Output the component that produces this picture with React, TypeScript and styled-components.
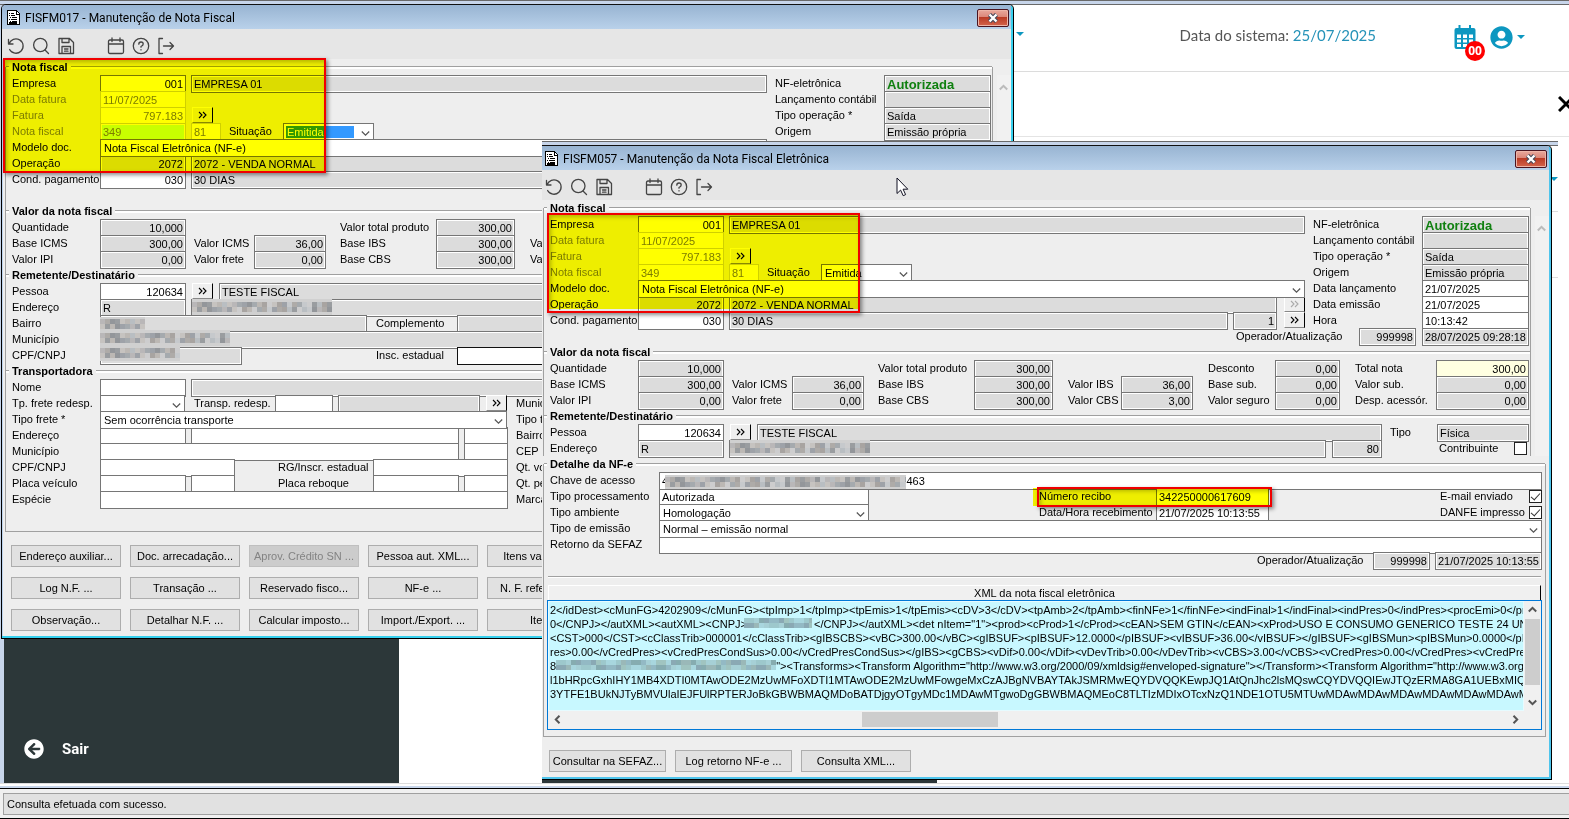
import React, { useId } from 'react';
import styled, { createGlobalStyle, css } from 'styled-components';
import { FaArrowCircleLeft, FaUserCircle } from 'react-icons/fa';

const Global = createGlobalStyle`
  * { box-sizing: border-box; }
  body {
    margin: 0;
    overflow: hidden;
    background: #fff;
    color: #000;
    font: 11px/16px "Liberation Sans", Arial, sans-serif;
  }
  button, input, select, textarea { font: inherit; color: inherit; margin: 0; border-radius: 0; }
  h1, h2 { margin: 0; font-size: inherit; }
`;

/* ---------- application shell ---------- */

const Desktop = styled.div`
  position: relative;
  display: flex;
  flex-direction: column;
  min-height: 100vh;
  overflow: hidden;
`;

const FrameEdge = styled.div`
  flex: none;
  height: 5px;
  border-top: 1px solid #696969;
  border-bottom: 1px solid #696969;
  background: #c7d5ea;
`;

const PageArea = styled.div`
  flex: 1;
  display: flex;
  flex-direction: column;
  border-left: 4px solid #c7d5ea;
`;

const AppHeader = styled.header`
  display: flex;
  align-items: center;
  justify-content: flex-end;
  height: 67px;
  padding: 0 44px 2px 0;
  border-bottom: 1px solid #dcdcdc;
  color: #0d97c0;
`;

const SystemDate = styled.p`
  margin: 0 64px 4px 0;
  font: 400 15px/24px Lato, "Open Sans", sans-serif;
  color: #555;
  span { color: #2592b8; }
`;

const IconButton = styled.button`
  position: relative;
  display: flex;
  align-items: center;
  gap: 4px;
  padding: 0;
  border: 0;
  background: none;
  color: #0d97c0;
  margin-left: 14px;
`;

const Badge = styled.span`
  position: absolute;
  left: 11px;
  top: 16px;
  width: 20px;
  height: 20px;
  border-radius: 50%;
  background: #f00;
  color: #fff;
  font: 700 12px/19px "Open Sans", sans-serif;
  text-align: center;
`;

const Caret = styled.span`
  width: 0;
  border: 4px solid transparent;
  border-top-color: #0d97c0;
  border-bottom: 0;
`;

const SubHeader = styled.div`
  display: flex;
  justify-content: flex-end;
  align-items: center;
  height: 65px;
  border-bottom: 1px solid #e4e4e4;
  overflow: hidden;
`;

const DismissButton = styled.button`
  flex: none;
  width: 16px;
  height: 16px;
  padding: 0;
  margin-right: -5px;
  border: 0;
  background: none;
`;

const MenuCaret = styled(Caret)`
  position: absolute;
  left: 1016px;
  top: 32px;
`;

const PageBody = styled.div`
  flex: 1;
  display: flex;
`;

const Sidebar = styled.nav`
  display: flex;
  align-items: flex-end;
  width: 395px;
  padding: 0 0 22px 20px;
  background: #2c3739;
`;

const ExitLink = styled.a`
  display: flex;
  align-items: center;
  gap: 18px;
  color: #fff;
  text-decoration: none;
  font: 700 15px/24px Roboto, sans-serif;
`;

const BottomEdge = styled.div`
  flex: none;
  height: 6px;
  border-top: 1px solid #ddd;
  border-bottom: 1px solid #000;
  background: linear-gradient(#fff 2px, #c7d5ea 2px);
`;

const StatusBar = styled.footer`
  flex: none;
  padding: 4px 0 3px 3px;
  background: #f0f0f0;
  border-bottom: 1px solid #000;
`;

const StatusText = styled.div`
  border: 1px solid #a0a0a0;
  border-right: 0;
  background: #e1e1e1;
  padding: 0 3px;
  height: 22px;
  line-height: 20px;
`;

const BackPage = styled.div`
  position: absolute;
  left: 542px;
  right: 11px;
  top: 141px;
  bottom: 36px;
  display: flex;
  flex-direction: column;
  background: #fff;
`;

const BackBar = styled.div`
  display: flex;
  align-items: center;
  justify-content: flex-end;
  height: 66px;
  border-bottom: 1px solid #ddd;
`;

const BackSidebar = styled.div`
  margin-top: auto;
  width: 395px;
  height: 8px;
  background: #2c3739;
`;

/* ---------- windows ---------- */

const WindowBox = styled.section<{ $second?: boolean }>`
  position: absolute;
  background: #eee;
  border-top: 1px solid #111;
  border-bottom: 1px solid #000;
  border-right: 1px solid #000;
  border-top-right-radius: 5px;
  overflow: hidden;
  ${(p) =>
    p.$second
      ? css`
          left: 542px;
          right: 17px;
          top: 145px;
          box-shadow: inset -2px -2px 0 #4fc5ec;
          --pad: 1px;
        `
      : css`
          left: 1px;
          width: calc(100% - 556px);
          top: 4px;
          border-left: 1px solid #000;
          border-top-left-radius: 5px;
          box-shadow: inset -2px -2px 0 #37d0ee, inset 1px 0 0 #bcd3ee;
          --pad: 3px;
        `}
  padding-bottom: 7px;
`;

const TitleBar = styled.header`
  display: flex;
  align-items: center;
  height: 24px;
  margin-right: 2px;
  padding: 1px 2px 0 calc(var(--pad) + 2px);
  background: linear-gradient(#98b4d2, #b9d1ea);
  h1 {
    flex: 1;
    padding-left: 5px;
    font: 400 12px/22px Roboto, "Open Sans", sans-serif;
  }
`;

const CloseButton = styled.button`
  display: grid;
  place-items: center;
  width: 32px;
  height: 18px;
  padding: 0;
  border: 1px solid #4a1420;
  border-radius: 2px;
  background: linear-gradient(#e9a99d 0, #dc8678 44%, #b93a24 45%, #d4644c);
  box-shadow: inset 0 0 0 1px #eeb5a8;
`;

const Toolbar = styled.div`
  display: flex;
  align-items: center;
  height: 30px;
  margin-right: 2px;
  padding-top: 3px;
  padding-left: calc(var(--pad) - 1px);
  background: #e6e6e6;
`;

const ToolButton = styled.button<{ $apart?: boolean }>`
  display: grid;
  align-items: center;
  justify-items: start;
  width: 25px;
  height: 25px;
  padding: 0 0 0 3px;
  border: 0;
  background: none;
  margin-left: ${(p) => (p.$apart ? 25 : 0)}px;
`;

const Scroller = styled.div`
  display: flex;
  margin-right: 2px;
  padding-left: var(--pad);
`;

const DetailScroller = styled(Scroller)`
  padding-right: 3px;
`;

const Frame = styled.div<{ $open?: boolean }>`
  flex: 1;
  min-width: 0;
  margin-top: 8px;
  border: 1px solid #a0a0a0;
  border-top: 0;
  ${(p) => p.$open && 'border-bottom: 0;'}
  & > section:first-child > h2:first-child { margin-top: -8px; }
`;

const Rail = styled.div`
  width: 18px;
  margin-top: 16px;
  padding: 5px 0 0 2px;
  border-left: 4px solid #eee;
  background: #f1f1f1;
`;

const Group = styled.section<{ $tail?: boolean }>`
  padding: 0 1px ${(p) => (p.$tail ? 24 : 0)}px 6px;
`;

const Legend = styled.h2`
  display: flex;
  align-items: center;
  height: 16px;
  margin: 0 -1px 0 -6px;
  gap: 3px;
  font-weight: 700;
  white-space: nowrap;
  &::before, &::after {
    content: "";
    height: 2px;
    border-top: 1px solid #a0a0a0;
    background: #fff;
  }
  &::before { width: 3px; }
  &::after { flex: 1; }
`;

const Row = styled.div<{ $end?: boolean }>`
  display: flex;
  align-items: flex-start;
  justify-content: ${(p) => (p.$end ? 'flex-end' : 'flex-start')};
  height: 16px;
`;

const Columns = styled.div`
  display: flex;
  gap: 8px;
`;

const MainColumn = styled.div`
  flex: 1;
  min-width: 0;
`;

const SideColumn = styled.div`
  flex: none;
  width: 216px;
`;

const Caption = styled.label<{ $w?: number; $pad?: number; $muted?: boolean }>`
  flex: none;
  width: ${(p) => (p.$w ? `${p.$w}px` : 'auto')};
  padding-left: ${(p) => p.$pad ?? 0}px;
  color: ${(p) => (p.$muted ? '#7c7c7c' : '#000')};
  white-space: nowrap;
`;

type Tone = 'plain' | 'gray' | 'off' | 'cream' | 'focus' | 'strong' | 'dark';

const tones: Record<Tone, ReturnType<typeof css>> = {
  plain: css`background: #fff;`,
  gray: css`background: #dcdcdc; box-shadow: inset 0 0 0 1px #fff;`,
  off: css`background: #fff; border-color: #d0d0d0; color: #7c7c7c;`,
  cream: css`background: #ffffe1;`,
  focus: css`background: #c8ffff; border-color: #d0d0d0; color: #7c7c7c; box-shadow: inset 0 0 0 1px #fff;`,
  strong: css`
    background: #dcdcdc;
    box-shadow: inset 0 0 0 1px #fff;
    color: #108010;
    font-size: 13px;
    font-weight: 700;
  `,
  dark: css`background: #fff; border-color: #111;`,
};

const Field = styled.input<{ $w?: number; $gap?: number; $tone?: Tone; $right?: boolean }>`
  ${(p) => (p.$w ? `flex: none; width: ${p.$w}px;` : 'flex: 1; min-width: 0; width: 0;')}
  height: 18px;
  margin-left: ${(p) => p.$gap ?? 0}px;
  padding: 0 2px;
  border: 1px solid #767676;
  outline: 0;
  line-height: 16px;
  text-align: ${(p) => (p.$right ? 'right' : 'left')};
  ${(p) => tones[p.$tone ?? 'plain']}
`;

const Picker = styled.span<{ $w?: number; $gap?: number }>`
  position: relative;
  display: block;
  ${(p) => (p.$w ? `flex: none; width: ${p.$w}px;` : 'flex: 1;')}
  margin-left: ${(p) => p.$gap ?? 0}px;
  svg { position: absolute; right: 4px; top: 6px; }
`;

const PickerInput = styled.select<{ $selected?: boolean }>`
  display: block;
  appearance: none;
  width: 100%;
  height: 18px;
  padding: 0 3px 2px;
  border: 1px solid #767676;
  outline: 0;
  background: #fff;
  ${(p) =>
    p.$selected &&
    css`
      color: #fff;
      background: linear-gradient(to right, #3399ff 70px, #fff 70px);
      box-shadow: inset 0 0 0 2px #fff;
    `}
`;

const LookupButton = styled.button<{ $gap: number }>`
  flex: none;
  display: grid;
  place-items: center;
  width: 21px;
  height: 16px;
  margin-left: ${(p) => p.$gap}px;
  padding: 0;
  border: 1px solid #fff;
  border-right-color: #000;
  border-bottom-color: #888;
  background: #eee;
  color: #000;
  &:disabled { color: #aaa; }
`;

const Tick = styled.input`
  appearance: none;
  flex: none;
  width: 13px;
  height: 13px;
  margin: 2px 1px 0 auto;
  border: 1px solid #222;
  background: #fff;
  display: grid;
  place-items: center;
  &:checked::after {
    content: "";
    width: 4px;
    height: 8px;
    margin-top: -2px;
    border: solid #333;
    border-width: 0 1px 1px 0;
    rotate: 42deg;
  }
`;

const ValueGrid = styled.div`
  display: grid;
  grid-template-columns: 88px 86px 68px 72px 110px 79px 68px 72px 82px 65px 96px 93px;
  grid-auto-rows: 16px;
  ${Field} { width: 100%; }
`;

const Masked = styled.span<{ $x: number; $y?: number }>`
  position: absolute;
  left: ${(p) => p.$x}px;
  top: ${(p) => p.$y ?? 2}px;
  line-height: 0;
`;

const Holder = styled.div`
  position: relative;
`;

const ButtonGrid = styled.div`
  display: grid;
  grid-template-columns: repeat(5, 110px);
  gap: 10px 9px;
  padding: 13px 0 0 9px;
`;

const ButtonBar = styled.div`
  display: flex;
  gap: 9px;
  padding: 13px 0 0 7px;
`;

const PushButton = styled.button<{ $w?: number }>`
  width: ${(p) => (p.$w ? `${p.$w}px` : 'auto')};
  height: 22px;
  padding: 0;
  border: 1px solid #adadad;
  background: #e1e1e1;
  white-space: nowrap;
  &:disabled { background: #ccc; border-color: #bfbfbf; color: #838383; }
`;

const Wash = styled.div<{ $box: string; $w?: number; $h?: number }>`
  position: absolute;
  inset: ${(p) => p.$box};
  ${(p) => p.$w && `width: ${p.$w}px; height: ${p.$h}px;`}
  background: #ff0;
  mix-blend-mode: multiply;
  pointer-events: none;
`;

const Outline = styled.div<{ $box: string; $w?: number; $h?: number }>`
  position: absolute;
  inset: ${(p) => p.$box};
  ${(p) => p.$w && `width: ${p.$w}px; height: ${p.$h}px;`}
  border: 2px solid #f00000;
  box-shadow: 2px 2px 4px rgba(0, 0, 0, 0.45), inset 2px 2px 4px rgba(0, 0, 0, 0.25);
  pointer-events: none;
`;

const Marked = styled.div`
  position: relative;
`;

const TickSlot = styled.div`
  display: flex;
  width: 104px;
  margin-left: auto;
  padding-right: 1px;
`;

const Divider = styled.hr`
  height: 2px;
  margin: 8px 3px 7px -2px;
  border: 0;
  border-top: 1px solid #a0a0a0;
  background: #fff;
`;

const XmlHeading = styled.h2`
  margin: 0 3px 0 -2px;
  height: 15px;
  border: 1px solid #fff;
  border-right-color: #000;
  border-bottom: 0;
  background: #f0f0f0;
  font-weight: 400;
  line-height: 15px;
  text-align: center;
`;

const XmlBox = styled.div`
  position: relative;
  display: grid;
  grid-template-columns: 1fr 17px;
  grid-template-rows: 110px 18px;
  margin: 0 2px 6px -3px;
  border: 1px solid #0078d7;
  background: #f0f0f0;
`;

const XmlText = styled.textarea`
  display: block;
  resize: none;
  overflow: hidden;
  width: 100%;
  padding: 1px 0 0 1px;
  border: 1px solid #e6fbff;
  outline: 0;
  background: #c8f8ff;
  line-height: 14px;
  white-space: pre;
`;

const VBar = styled.div`
  display: flex;
  flex-direction: column;
  align-items: center;
  justify-content: space-between;
  padding: 4px 1px;
  &::before {
    content: "";
    order: 1;
    width: 15px;
    height: 66px;
    margin-bottom: 9px;
    background: #cdcdcd;
  }
  svg:last-child { order: 2; }
`;

const HBar = styled.div`
  display: flex;
  align-items: center;
  padding: 0 4px 2px 5px;
`;

const HThumb = styled.span`
  width: 136px;
  height: 15px;
  margin-left: 31%;
  margin-right: auto;
  background: #cdcdcd;
`;

const Pointer = styled.svg`
  position: absolute;
  left: 896px;
  top: 177px;
`;

/* ---------- drawings ---------- */

const stroke = { fill: 'none', stroke: '#444', strokeWidth: 1.3, strokeLinecap: 'round' as const, strokeLinejoin: 'round' as const };

const Icon = ({ children }: { children: React.ReactNode }) => (
  <svg width="18" height="18" viewBox="0 0 18 18" {...stroke}>{children}</svg>
);

const AgendaIcon = () => (
  <svg width="22" height="24" viewBox="0 0 22 24">
    <path d="M4.500 0h2v3h8.500V0h2v3h2.500Q21.500 3 21.500 5v17q0 2-2 2h-17q-2 0-2-2V5q0-2 2-2h2z" fill="currentColor" />
    <path d="M3 9.500h4v3.500H3zM9 9.500h4v3.500H9zM15 9.500h4v3.500h-4zM3 14.500h4v3H3zM9 14.500h4v3H9zM15 14.500h4v3h-4zM3 19h4v3H3zM9 19h4v3H9zM15 19h4v3h-4z" fill="#fff" />
  </svg>
);

const PageIcon = () => (
  <svg width="13" height="15" viewBox="0 0 13 15" shapeRendering="crispEdges">
    <path d="M.5.5h9l3 3v11H.5z" fill="#fff" stroke="#000" />
    <path d="M9.500 1v3H12M12.500 3v11.500H1" fill="none" stroke="#000" />
    <path d="M2 3.500h1M4 3.500h3M2 5.500h1M4 5.500h4M3 7.500h1M5 7.500h5M2 9.500h1M4 9.500h6M3 11.500h1M5 11.500h5M2 13h8" stroke="#000" strokeWidth="1.300" />
  </svg>
);

const Chevron = ({ color = '#555', turn = 0, heavy = false, size = 9 }) => (
  <svg width={size} height={size} viewBox="0 0 9 9" fill="none" stroke={color} strokeWidth={heavy ? 2 : 1.2}>
    <path d="M.8 2.500 4.500 6.200 8.200 2.500" transform={`rotate(${turn} 4.500 4.500)`} />
  </svg>
);

const DoubleArrow = () => (
  <svg width="9" height="8" viewBox="0 0 9 8" fill="none" stroke="currentColor" strokeWidth="1.100">
    <path d="M1 1l3 3-3 3M5 1l3 3-3 3" />
  </svg>
);

const shades = ['#b9b7b8', '#9a9da0', '#c6c9cc', '#a8a4a1', '#a5aaae', '#c6c3c0', '#93969a', '#b9bec2', '#aeaba8', '#cdcdce', '#9ea2a8', '#bcb8b4'];
const aquaShades = ['#9dc8cc', '#86acb0', '#a6d0d6', '#93b9c4', '#a0c4c0', '#8aa9b4', '#a8d6de', '#9ab8b8'];

const Mosaic = ({ w, h = 10, cover = 0, aqua = false }: { w: number; h?: number; cover?: number; aqua?: boolean }) => {
  const set = aqua ? aquaShades : shades;
  const cells = [];
  for (let y = 0; y * 5 < h; y++)
    for (let x = 0; x * 5 < w; x++)
      cells.push(<rect key={`${x}-${y}`} x={x * 5} y={y * 5 + cover} width="5" height="5" fill={set[(x * 7 + y * 5 + ((x * x) % 5)) % set.length]} />);
  return (
    <svg width={w} height={h + cover * 2} shapeRendering="crispEdges" aria-hidden="true">
      <rect width={w} height={h + cover * 2} fill={aqua ? '#b4e4ea' : '#d0d0d0'} />
      {cells}
    </svg>
  );
};

/* ---------- shared pieces ---------- */

type BoxProps = { value?: string; w?: number; gap?: number; tone?: Tone; right?: boolean; id?: string; name?: string };

const Box = ({ value = '', w, gap, tone, right, id, name }: BoxProps) => (
  <Field id={id} aria-label={id ? undefined : name} readOnly defaultValue={value} $w={w} $gap={gap} $tone={tone} $right={right} />
);

const Select = ({ value = '', w, gap, id, selected }: { value?: string; w?: number; gap?: number; id: string; selected?: boolean }) => (
  <Picker $w={w} $gap={gap}>
    <PickerInput id={id} defaultValue={value} $selected={selected}>
      <option value={value}>{value}</option>
    </PickerInput>
    <Chevron />
  </Picker>
);

const Lookup = ({ gap, disabled }: { gap: number; disabled?: boolean }) => (
  <LookupButton type="button" aria-label="Pesquisar" $gap={gap} disabled={disabled}><DoubleArrow /></LookupButton>
);

type LabelledProps = BoxProps & { label: string; lw?: number; pad?: number; muted?: boolean };

const Labelled = ({ label, lw, pad, muted, ...box }: LabelledProps) => {
  const id = useId();
  return (
    <>
      <Caption htmlFor={id} $w={lw} $pad={pad} $muted={muted}>{label}</Caption>
      <Box id={id} {...box} />
    </>
  );
};

const LabelledSelect = ({ label, lw, pad, ...rest }: { label: string; lw: number; pad?: number; value?: string; w?: number; gap?: number; selected?: boolean }) => {
  const id = useId();
  return (
    <>
      <Caption htmlFor={id} $w={lw} $pad={pad}>{label}</Caption>
      <Select id={id} {...rest} />
    </>
  );
};

const LabelledTick = ({ label, checked, lw }: { label: string; checked?: boolean; lw: number }) => {
  const id = useId();
  return (
    <>
      <Caption htmlFor={id} $w={lw}>{label}</Caption>
      <Tick id={id} type="checkbox" defaultChecked={checked} />
    </>
  );
};

const WindowChrome = ({ title }: { title: string }) => (
  <>
    <TitleBar>
      <PageIcon />
      <h1>{title}</h1>
      <CloseButton type="button" aria-label="Fechar">
        <svg width="12" height="10" viewBox="0 0 12 10">
          <path d="M2.500 1.500 9.500 8.500M9.500 1.500 2.500 8.500" stroke="#454a5c" strokeWidth="4.400" />
          <path d="M2.500 1.500 9.500 8.500M9.500 1.500 2.500 8.500" stroke="#fff" strokeWidth="2.400" />
        </svg>
      </CloseButton>
    </TitleBar>
    <Toolbar>
      <ToolButton type="button" aria-label="Desfazer">
        <Icon><path d="M1.500 2.500v4.500h4.500M2 7a7.200 7.200 0 1 1 .6 5.500" /></Icon>
      </ToolButton>
      <ToolButton type="button" aria-label="Consultar">
        <Icon><circle cx="8.300" cy="8" r="6.700" /><path d="m13 13 3.500 3.500" /></Icon>
      </ToolButton>
      <ToolButton type="button" aria-label="Salvar">
        <Icon><path d="M2 1.500h10.500l4 4v11H2zM5 1.500v4h7v-4M5 16.500V9.500h8.500v7M7.500 12h3.500M7.500 14.200h3.500" /></Icon>
      </ToolButton>
      <ToolButton type="button" aria-label="Calendário" $apart>
        <Icon><path d="M3 3h12q1.500 0 1.500 1.500v10.500q0 1.500-1.500 1.500H3q-1.500 0-1.500-1.500V4.500Q1.500 3 3 3zM1.500 7h15M5 1v3.500M13 1v3.500" /></Icon>
      </ToolButton>
      <ToolButton type="button" aria-label="Ajuda">
        <Icon><circle cx="9" cy="9" r="7.700" /><path d="M6.800 7.200q0-2.200 2.200-2.200t2.200 1.900q0 1.300-2.200 2.600v.7M9 12.700v.2" /></Icon>
      </ToolButton>
      <ToolButton type="button" aria-label="Sair">
        <Icon><path d="M5.500 1.500H2v15h3.500M6.500 9h10M13 5.500 16.500 9 13 12.500" /></Icon>
      </ToolButton>
    </Toolbar>
  </>
);

const InvoiceGroup = ({ selected }: { selected?: boolean }) => (
  <Group>
    <Legend>Nota fiscal</Legend>
    <Columns>
      <MainColumn>
        <Row>
          <Labelled label="Empresa" lw={88} value="001" w={86} right />
          <Box name="Nome da empresa" value="EMPRESA 01" gap={5} tone="gray" />
        </Row>
        <Row><Labelled label="Data fatura" muted lw={88} value="11/07/2025" w={86} tone="off" /></Row>
        <Row>
          <Labelled label="Fatura" muted lw={88} value="797.183" w={86} tone="off" right />
          <Lookup gap={6} />
        </Row>
        <Row>
          <Labelled label="Nota fiscal" muted lw={88} value="349" w={86} tone={selected ? 'focus' : 'off'} />
          <Box name="Série" value="81" w={30} gap={5} tone="off" />
          <LabelledSelect label="Situação" lw={62} pad={8} value="Emitida" w={91} selected={selected} />
        </Row>
        <Row><LabelledSelect label="Modelo doc." lw={88} value="Nota Fiscal Eletrônica (NF-e)" /></Row>
        <Row>
          <Labelled label="Operação" lw={88} value="2072" w={86} tone="gray" right />
          <Box name="Descrição da operação" value="2072 - VENDA NORMAL" gap={5} tone="gray" />
          <Lookup gap={7} disabled />
        </Row>
        <Row>
          <Labelled label="Cond. pagamento" lw={88} value="030" w={86} right />
          <Box name="Descrição da condição" value="30 DIAS" gap={5} tone="gray" />
          <Box name="Parcelas" value="1" w={44} gap={5} tone="gray" right />
          <Lookup gap={7} />
        </Row>
      </MainColumn>
      <SideColumn>
        <Row><Labelled label="NF-eletrônica" lw={109} value="Autorizada" tone="strong" /></Row>
        <Row><Labelled label="Lançamento contábil" lw={109} tone="gray" /></Row>
        <Row><Labelled label="Tipo operação *" lw={109} value="Saída" tone="gray" /></Row>
        <Row><Labelled label="Origem" lw={109} value="Emissão própria" tone="gray" /></Row>
        {!selected && (
          <>
            <Row><Labelled label="Data lançamento" lw={109} value="21/07/2025" /></Row>
            <Row><Labelled label="Data emissão" lw={109} value="21/07/2025" /></Row>
            <Row><Labelled label="Hora" lw={109} value="10:13:42" /></Row>
          </>
        )}
      </SideColumn>
    </Columns>
    <Row $end>
      {!selected && (
        <>
          <Labelled label="Operador/Atualização" lw={123} value="999998" w={57} tone="gray" right />
          <Box name="Data da atualização" value="28/07/2025 09:28:18" w={107} gap={6} tone="gray" />
        </>
      )}
    </Row>
  </Group>
);

const amounts: (null | [string, string, Tone?])[] = [
  ['Quantidade', '10,000'], null, ['Valor total produto', '300,00'], null, ['Desconto', '0,00'], ['Total nota', '300,00', 'cream'],
  ['Base ICMS', '300,00'], ['Valor ICMS', '36,00'], ['Base IBS', '300,00'], ['Valor IBS', '36,00'], ['Base sub.', '0,00'], ['Valor sub.', '0,00'],
  ['Valor IPI', '0,00'], ['Valor frete', '0,00'], ['Base CBS', '300,00'], ['Valor CBS', '3,00'], ['Valor seguro', '0,00'], ['Desp. acessór.', '0,00'],
];
const amountPads = [0, 8, 14, 15, 15, 15];

const AmountGroup = () => (
  <Group>
    <Legend>Valor da nota fiscal</Legend>
    <ValueGrid>
      {amounts.map((a, i) =>
        a ? (
          <Labelled key={i} label={a[0]} pad={amountPads[i % 6]} value={a[1]} tone={a[2] ?? 'gray'} right />
        ) : (
          <React.Fragment key={i}><span /><span /></React.Fragment>
        ),
      )}
    </ValueGrid>
  </Group>
);

const PersonRows = () => (
  <>
    <Row>
      <Labelled label="Pessoa" lw={88} value="120634" w={86} right />
      <Lookup gap={6} />
      <Box name="Nome da pessoa" value="TESTE FISCAL" gap={6} tone="gray" />
      <Labelled label="Tipo" lw={55} pad={8} value="Física" w={92} tone="gray" />
    </Row>
    <Holder>
      <Row>
        <Labelled label="Endereço" lw={88} value="R" w={86} tone="gray" />
        <Box name="Logradouro" gap={5} tone="gray" />
        <Box name="Número" value="80" w={50} gap={6} tone="gray" right />
        <Caption as="span" $w={57} />
        <LabelledTick label="Contribuinte" lw={75} />
        <Caption as="span" $w={1} />
      </Row>
      <Masked $x={180} $y={0}><Mosaic w={140} cover={3} /></Masked>
    </Holder>
  </>
);

const gap = '\u00a0';
const xml = [
  '2</idDest><cMunFG>4202909</cMunFG><tpImp>1</tpImp><tpEmis>1</tpEmis><cDV>3</cDV><tpAmb>2</tpAmb><finNFe>1</finNFe><indFinal>1</indFinal><indPres>0</indPres><procEmi>0</procEmi><verProc>',
  `0</CNPJ></autXML><autXML><CNPJ>${gap.repeat(22)}</CNPJ></autXML><det nItem="1"><prod><cProd>1</cProd><cEAN>SEM GTIN</cEAN><xProd>USO E CONSUMO GENERICO TESTE 24 UNICA</xProd>`,
  '<CST>000</CST><cClassTrib>000001</cClassTrib><gIBSCBS><vBC>300.00</vBC><gIBSUF><pIBSUF>12.0000</pIBSUF><vIBSUF>36.00</vIBSUF></gIBSUF><gIBSMun><pIBSMun>0.0000</pIBSMun><vIBSMun>',
  'res>0.00</vCredPres><vCredPresCondSus>0.00</vCredPresCondSus></gIBS><gCBS><vDif>0.00</vDif><vDevTrib>0.00</vDevTrib><vCBS>3.00</vCBS><vCredPres>0.00</vCredPres><vCredPresCondSus>',
  `8${gap.repeat(72)}"><Transforms><Transform Algorithm="http://www.w3.org/2000/09/xmldsig#enveloped-signature"></Transform><Transform Algorithm="http://www.w3.org/`,
  'l1bHRpcGxhIHY1MB4XDTI0MTAwODE2MzUwMFoXDTI1MTAwODE2MzUwMFowgeMxCzAJBgNVBAYTAkJSMRMwEQYDVQQKEwpJQ1AtQnJhc2lsMQswCQYDVQQIEwJTQzERMA8GA1UEBxMIQmx1bWVu',
  '3YTFE1BUkNJTyBMVUlaIEJFUlRPTERJoBkGBWBMAQMDoBATDjgyOTgyMDc1MDAwMTgwoDgGBWBMAQMEoC8TLTIzMDIxOTcxNzQ1NDE1OTU5MTUwMDAwMDAwMDAwMDAwMDAwMDAwMDAwMDAwMDAw',
].join('\n');

const actions = [
  'Endereço auxiliar...', 'Doc. arrecadação...', 'Aprov. Crédito SN ...', 'Pessoa aut. XML...', 'Itens variados...',
  'Log N.F. ...', 'Transação ...', 'Reservado fisco...', 'NF-e ...', 'N. F. referência...',
  'Observação...', 'Detalhar N.F. ...', 'Calcular imposto...', 'Import./Export. ...', 'Itens',
];

const InvoiceWindow = () => (
  <WindowBox>
    <WindowChrome title="FISFM017 - Manutenção de Nota Fiscal" />
    <Scroller>
      <Frame>
        <InvoiceGroup selected />
        <AmountGroup />
        <Group>
          <Legend>Remetente/Destinatário</Legend>
          <PersonRows />
          <Holder>
            <Row>
              <Labelled label="Bairro" lw={88} w={267} tone="gray" />
              <Labelled label="Complemento" lw={90} pad={9} tone="gray" />
            </Row>
            <Row><Labelled label="Município" lw={88} tone="gray" /></Row>
            <Row>
              <Labelled label="CPF/CNPJ" lw={88} w={142} tone="gray" />
              <Labelled label="Insc. estadual" lw={215} pad={134} w={260} tone="dark" />
            </Row>
            <Masked $x={88}><Mosaic w={45} cover={2} /></Masked>
            <Masked $x={88} $y={15}><Mosaic w={130} cover={3} /></Masked>
            <Masked $x={88} $y={30}><Mosaic w={80} cover={3} /></Masked>
          </Holder>
        </Group>
        <Group $tail>
          <Legend>Transportadora</Legend>
          <Row>
            <Labelled label="Nome" lw={88} w={86} />
            <Box name="Nome da transportadora" gap={5} tone="gray" />
          </Row>
          <Row>
            <LabelledSelect label="Tp. frete redesp." lw={88} w={85} />
            <Labelled label="Transp. redesp." lw={90} pad={9} w={58} />
            <Box name="Nome redespacho" w={142} gap={5} tone="gray" />
            <Lookup gap={6} />
            <Caption as="span" $pad={9}>Município</Caption>
          </Row>
          <Row>
            <LabelledSelect label="Tipo frete *" lw={88} value="Sem ocorrência transporte" w={407} />
            <Caption as="span" $pad={9}>Tipo transporte</Caption>
          </Row>
          <Row>
            <Labelled label="Endereço" lw={88} w={86} />
            <Box name="Logradouro" w={268} gap={5} />
            <Box name="Número" w={44} gap={5} />
            <Caption as="span" $pad={8}>Bairro</Caption>
          </Row>
          <Row>
            <Labelled label="Município" lw={88} w={359} />
            <Box name="UF" w={44} gap={5} />
            <Caption as="span" $pad={8}>CEP</Caption>
          </Row>
          <Row>
            <Labelled label="CPF/CNPJ" lw={88} w={135} />
            <Labelled label="RG/Inscr. estadual" lw={138} pad={43} w={135} />
            <Caption as="span" $pad={8}>Qt. volume</Caption>
          </Row>
          <Row>
            <Labelled label="Placa veículo" lw={88} w={86} />
            <Box name="UF do veículo" w={44} gap={5} />
            <Labelled label="Placa reboque" lw={138} pad={43} w={86} />
            <Box name="UF do reboque" w={44} gap={5} />
            <Caption as="span" $pad={8}>Qt. peso</Caption>
          </Row>
          <Row>
            <Labelled label="Espécie" lw={88} w={408} />
            <Caption as="span" $pad={8}>Marca</Caption>
          </Row>
        </Group>
      </Frame>
      <Rail><Chevron color="#bbb" turn={180} heavy /></Rail>
    </Scroller>
    <ButtonGrid>
      {actions.map((a) => <PushButton key={a} type="button" disabled={a.startsWith('Aprov')}>{a}</PushButton>)}
    </ButtonGrid>
    <Wash $box="55px auto auto 3px" $w={320} $h={112} />
    <Outline $box="53px auto auto 1px" $w={323} $h={115} />
  </WindowBox>
);

const ElectronicWindow = () => (
  <WindowBox $second>
    <WindowChrome title="FISFM057 - Manutenção da Nota Fiscal Eletrônica" />
    <Scroller>
      <Frame $open>
        <InvoiceGroup />
        <AmountGroup />
        <Group>
          <Legend>Remetente/Destinatário</Legend>
          <PersonRows />
        </Group>
      </Frame>
      <Rail><Chevron color="#bbb" turn={180} heavy /></Rail>
    </Scroller>
    <DetailScroller>
      <Frame>
        <Group>
          <Legend>Detalhe da NF-e</Legend>
          <Holder>
            <Row><Labelled label="Chave de acesso" lw={109} value={`4${gap.repeat(78)}463`} /><Caption as="span" $w={2} /></Row>
            <Masked $x={115} $y={3}><Mosaic w={241} cover={2} /></Masked>
          </Holder>
          <Row>
            <Labelled label="Tipo processamento" lw={109} value="Autorizada" w={210} />
            <Caption as="span" $w={170} />
            <Marked>
              <Row><Labelled label="Número recibo" lw={117} value="342250000617609" w={113} /></Row>
              <Wash $box="0 0 -2px -6px" />
              <Outline $box="-1px -3px -3px -2px" />
            </Marked>
            <TickSlot><LabelledTick label="E-mail enviado" lw={87} checked /></TickSlot>
          </Row>
          <Row>
            <LabelledSelect label="Tipo ambiente" lw={109} value="Homologação" w={210} />
            <Caption as="span" $w={170} />
            <Labelled label="Data/Hora recebimento" lw={117} value="21/07/2025 10:13:55" w={113} />
            <TickSlot><LabelledTick label="DANFE impresso" lw={87} checked /></TickSlot>
          </Row>
          <Row><LabelledSelect label="Tipo de emissão" lw={109} value="Normal – emissão normal" /><Caption as="span" $w={2} /></Row>
          <Row><Labelled label="Retorno da SEFAZ" lw={109} /><Caption as="span" $w={2} /></Row>
          <Row $end>
            <Labelled label="Operador/Atualização" lw={116} value="999998" w={57} tone="gray" right />
            <Box name="Data da atualização" value="21/07/2025 10:13:55" w={107} gap={5} tone="gray" />
            <Caption as="span" $w={2} />
          </Row>
          <Divider />
          <XmlHeading id="xml-title">XML da nota fiscal eletrônica</XmlHeading>
          <XmlBox>
            <XmlText readOnly aria-labelledby="xml-title" wrap="off" defaultValue={xml} />
            <VBar>
              <Chevron turn={180} heavy />
              <Chevron heavy />
            </VBar>
            <HBar>
              <Chevron turn={90} heavy />
              <HThumb />
              <Chevron turn={270} heavy />
            </HBar>
            <Masked $x={196} $y={17}><Mosaic w={68} aqua /></Masked>
            <Masked $x={8} $y={59}><Mosaic w={220} aqua /></Masked>
          </XmlBox>
        </Group>
      </Frame>
    </DetailScroller>
    <ButtonBar>
      <PushButton type="button" $w={117}>Consultar na SEFAZ...</PushButton>
      <PushButton type="button" $w={117}>Log retorno NF-e ...</PushButton>
      <PushButton type="button" $w={110}>Consulta XML...</PushButton>
    </ButtonBar>
    <Wash $box="69px auto auto 7px" $w={309} $h={94} />
    <Outline $box="67px auto auto 5px" $w={313} $h={100} />
  </WindowBox>
);

export default function App() {
  return (
    <>
      <Global />
      <Desktop>
        <FrameEdge />
        <PageArea>
          <AppHeader>
            <SystemDate>Data do sistema: <span>25/07/2025</span></SystemDate>
            <IconButton type="button" aria-label="Agenda"><AgendaIcon /><Badge>00</Badge></IconButton>
            <IconButton type="button" aria-label="Usuário"><FaUserCircle size={23} /><Caret /></IconButton>
          </AppHeader>
          <SubHeader>
            <DismissButton type="button" aria-label="Fechar painel">
              <svg width="16" height="16" viewBox="0 0 16 16" stroke="#000" strokeWidth="3"><path d="M1 1l14 14M15 1 1 15" /></svg>
            </DismissButton>
          </SubHeader>
          <PageBody>
            <Sidebar>
              <ExitLink href="#sair"><FaArrowCircleLeft size={20} />Sair</ExitLink>
            </Sidebar>
          </PageBody>
        </PageArea>
        <BottomEdge />
        <StatusBar><StatusText role="status">Consulta efetuada com sucesso.</StatusText></StatusBar>
        <MenuCaret />
        <InvoiceWindow />
        <BackPage>
          <FrameEdge />
          <BackBar><Caret /></BackBar>
          <BackBar />
          <BackSidebar />
        </BackPage>
        <ElectronicWindow />
        <Pointer width="13" height="20" viewBox="0 0 13 20">
          <path d="M1 1v15.500l3.600-3.400 2.600 5.600 2.400-1.100-2.500-5.400h4.700z" fill="#fff" stroke="#112" />
        </Pointer>
      </Desktop>
    </>
  );
}
